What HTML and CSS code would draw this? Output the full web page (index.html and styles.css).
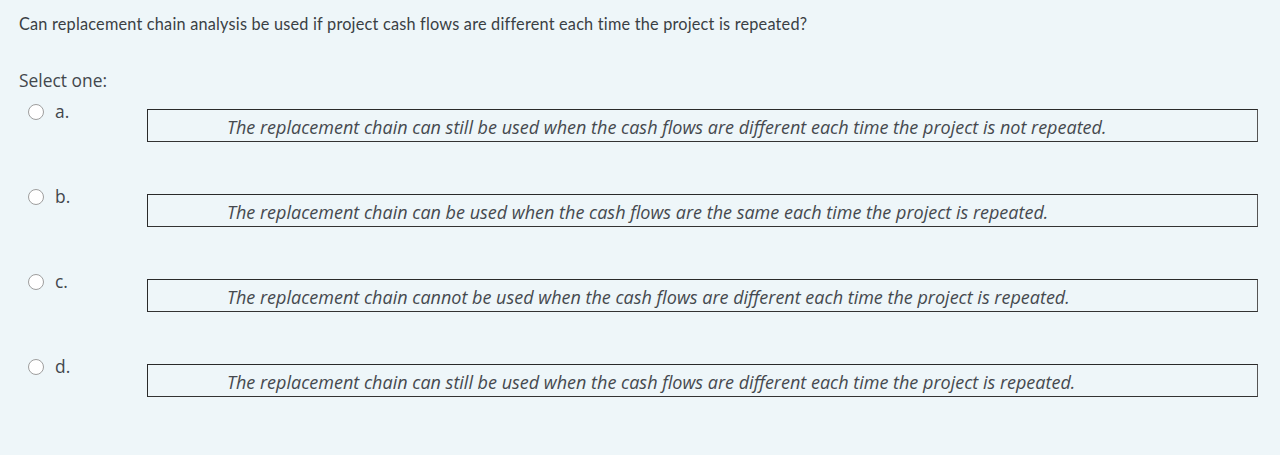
FILE: index.html
```html
<!DOCTYPE html>
<html>
<head>
<meta charset="utf-8">
<link rel="stylesheet" href="styles.css">
</head>
<body>
<div class="page">
  <p class="question">Can replacement chain analysis be used if project cash flows are different each time the project is repeated?</p>
  <div class="prompt">Select one:</div>
  <div class="options">
    <div class="option">
      <span class="radio"></span>
      <span class="letter">a.</span>
      <div class="answer">The replacement chain can still be used when the cash flows are different each time the project is not repeated.</div>
    </div>
    <div class="option">
      <span class="radio"></span>
      <span class="letter">b.</span>
      <div class="answer">The replacement chain can be used when the cash flows are the same each time the project is repeated.</div>
    </div>
    <div class="option">
      <span class="radio"></span>
      <span class="letter">c.</span>
      <div class="answer">The replacement chain cannot be used when the cash flows are different each time the project is repeated.</div>
    </div>
    <div class="option">
      <span class="radio"></span>
      <span class="letter">d.</span>
      <div class="answer">The replacement chain can still be used when the cash flows are different each time the project is repeated.</div>
    </div>
  </div>
</div>
</body>
</html>
```
FILE: styles.css
```css
html, body {
  margin: 0;
  padding: 0;
  background: #eef6f9;
}
.page {
  padding: 13px 22px 0 19px;
  color: #333;
}
.question {
  margin: 0;
  font-family: Lato, "Liberation Sans", sans-serif;
  font-size: 16.3px;
  letter-spacing: 0.2px;
  line-height: 22px;
  color: #3a3f44;
}
.prompt {
  margin-top: 34px;
  font-family: "Open Sans", sans-serif;
  font-size: 17.4px;
  line-height: 22px;
  color: #42474c;
}
.options {
  margin-top: 9px;
  display: flex;
  flex-direction: column;
  gap: 43px;
}
.option {
  display: flex;
  align-items: flex-start;
}
.radio {
  width: 14px;
  height: 14px;
  border: 1.5px solid #9e9e9e;
  border-radius: 50%;
  background: #fff;
  margin: 4px 0 0 9px;
  flex: none;
}
.letter {
  width: 92px;
  margin-left: 11px;
  font-family: "Open Sans", sans-serif;
  font-size: 17.4px;
  line-height: 22px;
  color: #42474c;
}
.answer {
  flex: 1;
  margin-top: 9px;
  height: 31px;
  border: 1px solid #2a2a2a;
  border-right-color: #555;
  border-bottom-color: #333;
  padding-left: 79px;
  font-family: "Open Sans", sans-serif;
  font-style: italic;
  font-size: 18px;
  line-height: 34px;
  color: #45494e;
  box-sizing: content-box;
  white-space: nowrap;
}
```
